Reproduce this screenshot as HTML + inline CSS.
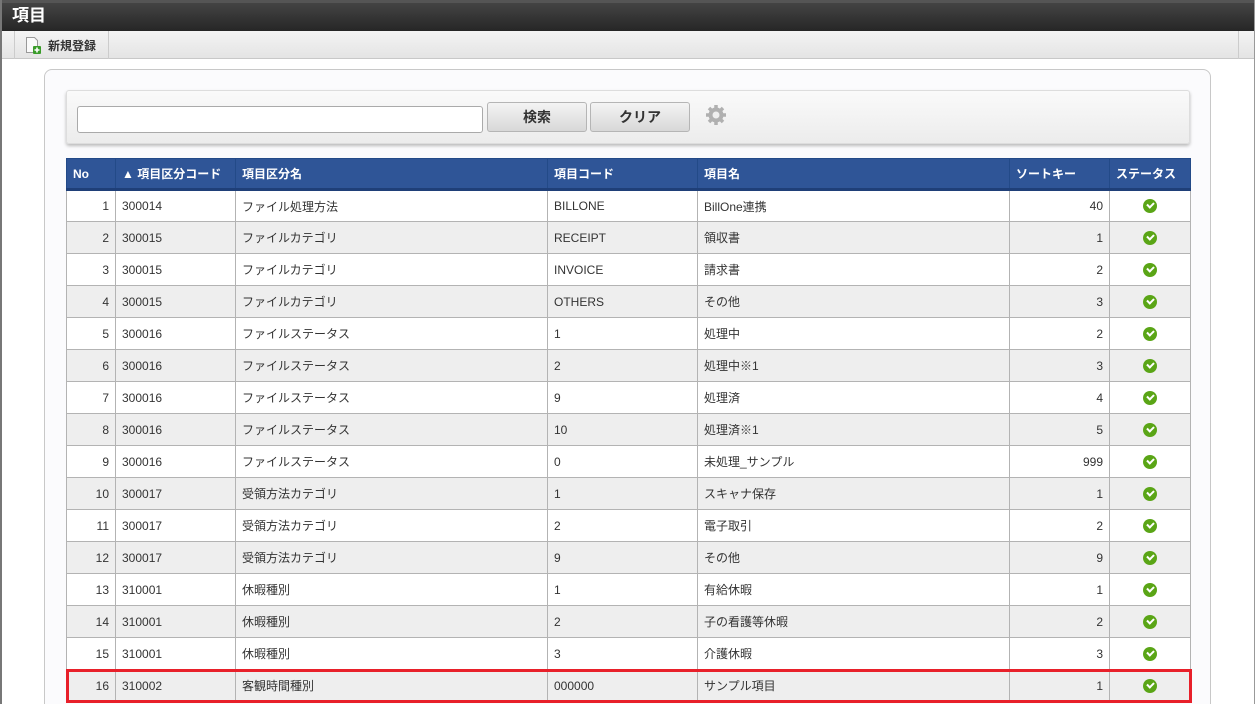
<!DOCTYPE html>
<html><head><meta charset="utf-8"><style>
*{box-sizing:border-box;margin:0;padding:0}
html,body{width:1255px;height:704px;overflow:hidden}
body{background:#fff;font-family:"Liberation Sans","Noto Sans CJK JP",sans-serif;font-size:12px;color:#333;position:relative}
.lb{position:absolute;left:0;top:0;width:2px;height:704px;background:#777}
.rb{position:absolute;right:0;top:0;width:1px;height:704px;background:#999}
.hd{position:absolute;left:0;top:0;width:1255px;height:31px;background:linear-gradient(#444,#262626);border-top:3px solid #555;color:#fff;font-weight:bold;font-size:17px;padding:2px 12px;line-height:22px}
.tb{position:absolute;left:2px;top:31px;width:1252px;height:28px;background:linear-gradient(#f4f4f4,#e4e4e4);border-bottom:1px solid #c8c8c8}
.tb .btn{position:absolute;left:12px;top:0;height:28px;width:95px;border-left:1px solid #ccc;border-right:1px solid #ccc;padding:6px 0 0 33px;font-weight:bold;font-size:12px}
.tb .r{position:absolute;left:1236px;top:0;height:28px;border-left:1px solid #ccc}
.panel{position:absolute;left:44px;top:69px;width:1167px;height:660px;border:1px solid #c8c8c8;border-radius:8px;background:#fbfbfd}
.sb{position:absolute;left:66px;top:90px;width:1124px;height:54px;border:1px solid #ddd;border-radius:3px;background:linear-gradient(#fafafa,#ececec);box-shadow:0 2px 3px #bbb}
.in{position:absolute;left:10px;top:15px;width:406px;height:27px;border:1px solid #aaa;border-radius:3px;background:#fff}
.b{position:absolute;top:11px;width:100px;height:30px;border:1px solid #b5b5b5;border-radius:3px;background:linear-gradient(#f4f4f4,#d8d8d8);text-align:center;line-height:28px;font-weight:bold;font-size:14px}
table{position:absolute;left:66px;top:158px;border-collapse:collapse;width:1124px;table-layout:fixed}
th{background:#2f5597;color:#fff;font-weight:bold;text-align:left;height:31px;padding:0 6px;border:1px solid #234a88;border-bottom:3px solid #1f3f78;font-size:12px}
td{height:32px;padding:0 6px;border:1px solid #b3b3b3;font-size:12px;background:#fff}
tr:nth-child(odd) td{background:#eee}
td.n{text-align:right}
td.s{text-align:center}
.ck{display:inline-block;width:14px;height:14px;border-radius:50%;background:#5aa516;vertical-align:middle;position:relative}
.ck:after{content:"";position:absolute;left:4px;top:3px;width:5px;height:3px;border-left:2px solid #fff;border-bottom:2px solid #fff;transform:rotate(-45deg)}
.red{position:absolute;left:66px;top:669px;width:1126px;height:34px;border:3px solid #e8202a}
</style></head><body>
<div class="hd">項目</div>
<div class="tb"><div class="btn"><svg style="position:absolute;left:10px;top:5px" width="16" height="18" viewBox="0 0 16 18"><path d="M1.5 1.5h8l3 3v12h-11z" fill="#fafafa" stroke="#999"/><rect x="8" y="10" width="8" height="8" rx="1" fill="#3a9c2a"/><path d="M12 11.5v5M9.5 14h5" stroke="#fff" stroke-width="1.6"/></svg>新規登録</div><div class="r"></div></div>
<div class="panel"></div>
<div class="sb"><div class="in"></div><div class="b" style="left:420px">検索</div><div class="b" style="left:523px">クリア</div>
<svg style="position:absolute;left:638px;top:13px" width="22" height="22" viewBox="0 0 22 22"><g fill="#b0b0b0"><circle cx="11" cy="11" r="7.5"/><g stroke="#b0b0b0" stroke-width="3.5"><path d="M11 1v20M1 11h20M4 4l14 14M18 4L4 18"/></g></g><circle cx="11" cy="11" r="3.5" fill="#eee"/></svg></div>
<table>
<colgroup><col style="width:49px"><col style="width:120px"><col style="width:312px"><col style="width:150px"><col style="width:312px"><col style="width:100px"><col style="width:81px"></colgroup>
<tr><th>No</th><th>▲ 項目区分コード</th><th>項目区分名</th><th>項目コード</th><th>項目名</th><th>ソートキー</th><th>ステータス</th></tr>
<tr><td class="n">1</td><td>300014</td><td>ファイル処理方法</td><td>BILLONE</td><td>BillOne連携</td><td class="n">40</td><td class="s"><i class="ck"></i></td></tr>
<tr><td class="n">2</td><td>300015</td><td>ファイルカテゴリ</td><td>RECEIPT</td><td>領収書</td><td class="n">1</td><td class="s"><i class="ck"></i></td></tr>
<tr><td class="n">3</td><td>300015</td><td>ファイルカテゴリ</td><td>INVOICE</td><td>請求書</td><td class="n">2</td><td class="s"><i class="ck"></i></td></tr>
<tr><td class="n">4</td><td>300015</td><td>ファイルカテゴリ</td><td>OTHERS</td><td>その他</td><td class="n">3</td><td class="s"><i class="ck"></i></td></tr>
<tr><td class="n">5</td><td>300016</td><td>ファイルステータス</td><td>1</td><td>処理中</td><td class="n">2</td><td class="s"><i class="ck"></i></td></tr>
<tr><td class="n">6</td><td>300016</td><td>ファイルステータス</td><td>2</td><td>処理中※1</td><td class="n">3</td><td class="s"><i class="ck"></i></td></tr>
<tr><td class="n">7</td><td>300016</td><td>ファイルステータス</td><td>9</td><td>処理済</td><td class="n">4</td><td class="s"><i class="ck"></i></td></tr>
<tr><td class="n">8</td><td>300016</td><td>ファイルステータス</td><td>10</td><td>処理済※1</td><td class="n">5</td><td class="s"><i class="ck"></i></td></tr>
<tr><td class="n">9</td><td>300016</td><td>ファイルステータス</td><td>0</td><td>未処理_サンプル</td><td class="n">999</td><td class="s"><i class="ck"></i></td></tr>
<tr><td class="n">10</td><td>300017</td><td>受領方法カテゴリ</td><td>1</td><td>スキャナ保存</td><td class="n">1</td><td class="s"><i class="ck"></i></td></tr>
<tr><td class="n">11</td><td>300017</td><td>受領方法カテゴリ</td><td>2</td><td>電子取引</td><td class="n">2</td><td class="s"><i class="ck"></i></td></tr>
<tr><td class="n">12</td><td>300017</td><td>受領方法カテゴリ</td><td>9</td><td>その他</td><td class="n">9</td><td class="s"><i class="ck"></i></td></tr>
<tr><td class="n">13</td><td>310001</td><td>休暇種別</td><td>1</td><td>有給休暇</td><td class="n">1</td><td class="s"><i class="ck"></i></td></tr>
<tr><td class="n">14</td><td>310001</td><td>休暇種別</td><td>2</td><td>子の看護等休暇</td><td class="n">2</td><td class="s"><i class="ck"></i></td></tr>
<tr><td class="n">15</td><td>310001</td><td>休暇種別</td><td>3</td><td>介護休暇</td><td class="n">3</td><td class="s"><i class="ck"></i></td></tr>
<tr><td class="n">16</td><td>310002</td><td>客観時間種別</td><td>000000</td><td>サンプル項目</td><td class="n">1</td><td class="s"><i class="ck"></i></td></tr>
</table>
<div class="red"></div>
<div class="lb"></div><div class="rb"></div>
</body></html>
